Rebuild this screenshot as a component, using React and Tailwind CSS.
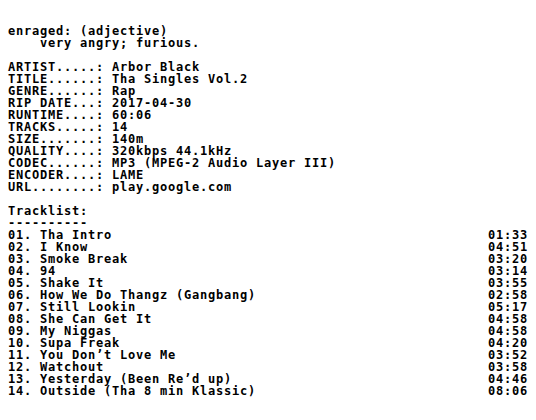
const INFO = [
  ["ARTIST.....", "Arbor Black"],
  ["TITLE......", "Tha Singles Vol.2"],
  ["GENRE......", "Rap"],
  ["RIP DATE...", "2017-04-30"],
  ["RUNTIME....", "60:06"],
  ["TRACKS.....", "14"],
  ["SIZE.......", "140m"],
  ["QUALITY....", "320kbps 44.1kHz"],
  ["CODEC......", "MP3 (MPEG-2 Audio Layer III)"],
  ["ENCODER....", "LAME"],
  ["URL........", "play.google.com"],
];

const TRACKS = [
  ["Tha Intro", "01:33"],
  ["I Know", "04:51"],
  ["Smoke Break", "03:20"],
  ["94", "03:14"],
  ["Shake It", "03:55"],
  ["How We Do Thangz (Gangbang)", "02:58"],
  ["Still Lookin", "05:17"],
  ["She Can Get It", "04:58"],
  ["My Niggas", "04:58"],
  ["Supa Freak", "04:20"],
  ["You Don’t Love Me", "03:52"],
  ["Watchout", "03:58"],
  ["Yesterday (Been Re’d up)", "04:46"],
  ["Outside (Tha 8 min Klassic)", "08:06"],
];

export default function App() {
  return (
    <div className="min-h-screen bg-white text-black pl-2 pt-[25px] font-['DejaVu_Sans_Mono',monospace] font-bold text-[12px] tracking-[0.775px] leading-[12px] whitespace-pre">
      {/* Definition */}
      <div>enraged: (adjective)</div>
      <div>{"    very angry; furious."}</div>
      <div>{" "}</div>

      {/* Release info */}
      {INFO.map(([k, v]) => (
        <div key={k}>{k}: {v}</div>
      ))}
      <div>{" "}</div>

      {/* Tracklist */}
      <div>Tracklist:</div>
      <div>----------</div>
      {TRACKS.map(([name, time], i) => (
        <div key={name} className="flex justify-between w-[520px]">
          <span>{String(i + 1).padStart(2, "0")}. {name}</span>
          <span>{time}</span>
        </div>
      ))}
    </div>
  );
}
